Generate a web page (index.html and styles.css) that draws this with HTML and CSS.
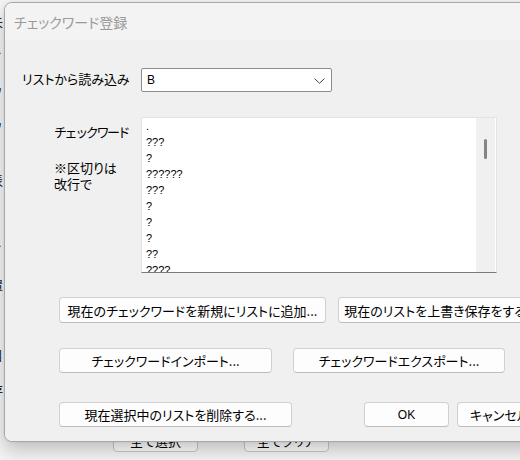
FILE: index.html
```html
<!DOCTYPE html>
<html lang="ja">
<head>
<meta charset="utf-8">
<title>チェックワード登録</title>
<link rel="stylesheet" href="styles.css">
</head>
<body>
<div class="desktop">
  <div class="bgwin">
    <div class="frag">未<br>&nbsp;<br>イ<br>&nbsp;<br>ワ<br>&nbsp;<br>ワ<br>&nbsp;<br>&nbsp;<br>表<br>&nbsp;<br>&nbsp;<br>&nbsp;<br>イ<br>&nbsp;<br>置<br>&nbsp;<br>&nbsp;<br>&nbsp;<br>目<br>&nbsp;<br>存</div>
    <div class="bgbtns">
      <div class="bgbtn">全て選択</div>
      <div class="bgbtn">全てクリア</div>
    </div>
  </div>

  <div class="dialog">
    <div class="titlebar">チェックワード登録</div>
    <div class="dbody">
      <div class="row1">
        <div class="lbl">リストから読み込み</div>
        <div class="combo">
          <span class="combo-val">B</span>
          <svg class="chev" width="11" height="6" viewBox="0 0 11 6"><path d="M0.5 0.5 L5.5 5.3 L10.5 0.5" fill="none" stroke="#444" stroke-width="1"/></svg>
        </div>
      </div>
      <div class="row2">
        <div class="side">
          <div class="lbl cw">チェックワード</div>
          <div class="note">※区切りは<br>改行で</div>
        </div>
        <div class="tbox">
          <div class="lines">
            <div>.</div>
            <div>???</div>
            <div>?</div>
            <div>??????</div>
            <div>???</div>
            <div>?</div>
            <div>?</div>
            <div>?</div>
            <div>??</div>
            <div>????</div>
          </div>
          <div class="sbar"><div class="thumb"></div></div>
        </div>
      </div>
      <div class="brow b1">
        <div class="btn w-add">現在のチェックワードを新規にリストに追加...</div>
        <div class="btn w-save">現在のリストを上書き保存をする...</div>
      </div>
      <div class="brow b2">
        <div class="btn w-imp">チェックワードインポート...</div>
        <div class="btn w-exp">チェックワードエクスポート...</div>
      </div>
      <div class="brow b3">
        <div class="btn w-del">現在選択中のリストを削除する...</div>
        <div class="btn w-ok">OK</div>
        <div class="btn w-cancel">キャンセル</div>
      </div>
    </div>
  </div>
</div>
</body>
</html>
```
FILE: styles.css
```css
* { box-sizing: border-box; }
html, body { margin: 0; padding: 0; }
body {
  width: 520px;
  height: 460px;
  overflow: hidden;
  font-family: "Noto Sans CJK JP", "Liberation Sans", sans-serif;
  font-feature-settings: "palt";
  color: #000;
}
.desktop {
  position: relative;
  width: 520px;
  height: 460px;
  overflow: hidden;
  background: #f0f0f0;
}
.bgwin {
  position: absolute;
  left: 0; top: 0; right: 0; bottom: 0;
  background: #f4f4f4;
  display: flex;
  flex-direction: column;
}
.frag {
  margin-left: -10px;
  width: 14px;
  padding-top: 13px;
  font-size: 13px;
  line-height: 17.5px;
  color: #222;
}
.bgbtns {
  margin-top: auto;
  padding: 0 0 8px 113px;
  display: flex;
  gap: 46px;
}
.bgbtn {
  width: 85px;
  height: 24px;
  background: #fdfdfd;
  border: 1px solid #c8c8c8;
  border-radius: 4px;
  font-size: 13px;
  display: flex;
  align-items: center;
  justify-content: center;
}
.dialog {
  position: absolute;
  left: 4px;
  top: 2px;
  width: 540px;
  height: 440px;
  border: 1px solid #a8a8a8;
  border-radius: 8px;
  overflow: hidden;
  background: #f0f0f0;
  box-shadow: 0 8px 18px rgba(0,0,0,0.22), 0 0 2px rgba(0,0,0,0.1);
  display: flex;
  flex-direction: column;
}
.titlebar {
  height: 37px;
  flex: none;
  background: #f3f3f3;
  color: #9a9a9a;
  font-size: 14px;
  padding-left: 9px;
  display: flex;
  align-items: center;
}
.dbody {
  flex: 1;
  background: #f0f0f0;
  padding: 28px 0 0 17px;
  font-size: 13px;
}
.row1 {
  display: flex;
  align-items: center;
}
.row1 .lbl {
  width: 119px;
  margin-bottom: 4px;
}
.combo {
  width: 191px;
  height: 24px;
  background: #fff;
  border: 1px solid #8c8c8c;
  border-radius: 2px;
  display: flex;
  align-items: center;
  padding: 0 6px 0 5px;
}
.combo-val {
  font-family: "Liberation Sans", sans-serif;
  font-size: 12px;
  flex: 1;
}
.chev { margin-top: 1px; }
.row2 {
  margin-top: 25px;
  display: flex;
}
.side {
  width: 119px;
  padding: 7px 0 0 32px;
  line-height: 16px;
}
.cw {
  font-feature-settings: normal;
  letter-spacing: -2.4px;
  white-space: nowrap;
}
.note {
  margin-top: 20px;
  line-height: 16px;
  white-space: nowrap;
}
.tbox {
  width: 356px;
  height: 156px;
  background: #fff;
  border: 1px solid #e3e3e3;
  border-bottom: 1px solid #7a7a7a;
  display: flex;
  overflow: hidden;
}
.lines {
  flex: 1;
  padding: 0 0 0 4px;
  font-family: "Liberation Sans", sans-serif;
  font-size: 11px;
  line-height: 16px;
}
.sbar {
  width: 20px;
  background: #f0f0f0;
  border-right: 1px solid #fff;
  padding: 21px 0 0 8px;
}
.thumb {
  width: 3px;
  height: 20px;
  background: #858585;
  border-radius: 2px;
}
.brow {
  display: flex;
  padding-left: 37px;
}
.b1 { margin-top: 24px; gap: 12px; }
.b2 { margin-top: 25px; gap: 21px; }
.b3 { margin-top: 29px; }
.btn {
  height: 25px;
  background: #fdfdfd;
  border: 1px solid #d0d0d0;
  border-bottom-color: #bdbdbd;
  border-radius: 4px;
  display: flex;
  align-items: center;
  justify-content: center;
  white-space: nowrap;
  font-size: 13px;
  flex: none;
}
.b1 .btn { height: 26px; }
.w-add { width: 267px; }
.w-save { width: 205px; }
.w-imp { width: 213px; }
.w-exp { width: 212px; }
.w-del { width: 233px; }
.w-ok { width: 85px; margin-left: 72px; font-family: "Liberation Sans", sans-serif; font-size: 12px; }
.w-cancel { width: 85px; margin-left: 8px; }
```
